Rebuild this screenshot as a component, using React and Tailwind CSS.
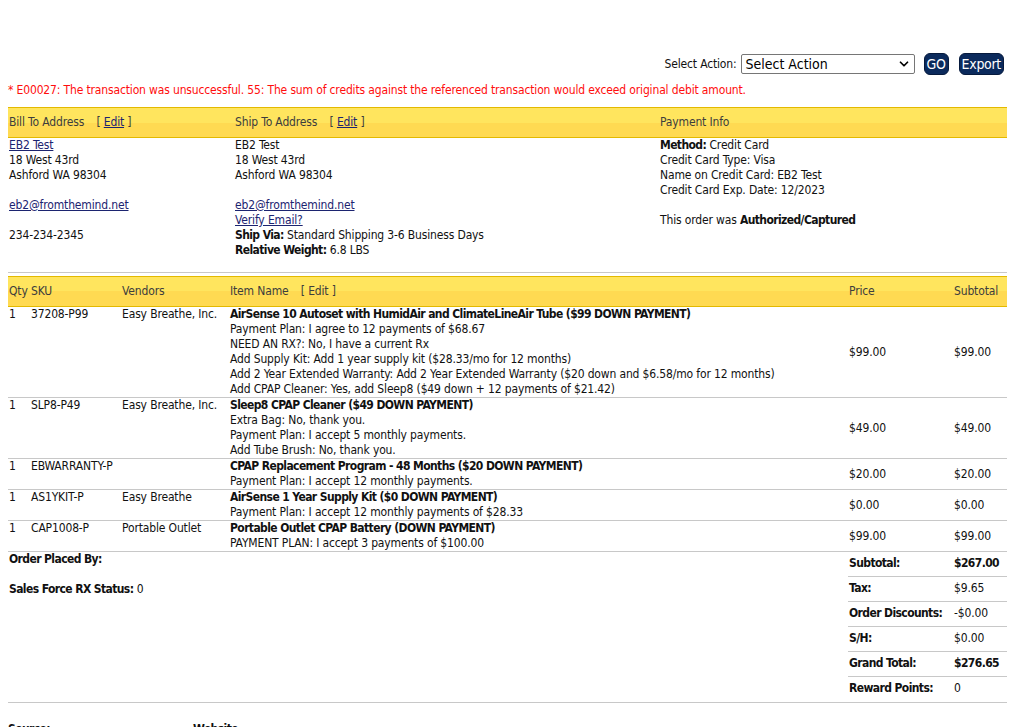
import { ChevronDown } from 'lucide-react';

const bandClass =
  'bg-[linear-gradient(to_bottom,#ffe55e_50%,#ffda52_50%)] border-y border-[#e3b900] text-[#3d3d3d]';

const cols = 'grid grid-cols-[22px_91px_108px_619px_105px_54px]';
const bold = 'font-bold tracking-[-0.6px]';

const items = [
  {
    qty: 1,
    sku: '37208-P99',
    vendor: 'Easy Breathe, Inc.',
    name: 'AirSense 10 Autoset with HumidAir and ClimateLineAir Tube ($99 DOWN PAYMENT)',
    options: [
      'Payment Plan: I agree to 12 payments of $68.67',
      'NEED AN RX?: No, I have a current Rx',
      'Add Supply Kit: Add 1 year supply kit ($28.33/mo for 12 months)',
      'Add 2 Year Extended Warranty: Add 2 Year Extended Warranty ($20 down and $6.58/mo for 12 months)',
      'Add CPAP Cleaner: Yes, add Sleep8 ($49 down + 12 payments of $21.42)',
    ],
    price: '$99.00',
    subtotal: '$99.00',
  },
  {
    qty: 1,
    sku: 'SLP8-P49',
    vendor: 'Easy Breathe, Inc.',
    name: 'Sleep8 CPAP Cleaner ($49 DOWN PAYMENT)',
    options: [
      'Extra Bag: No, thank you.',
      'Payment Plan: I accept 5 monthly payments.',
      'Add Tube Brush: No, thank you.',
    ],
    price: '$49.00',
    subtotal: '$49.00',
  },
  {
    qty: 1,
    sku: 'EBWARRANTY-P',
    vendor: '',
    name: 'CPAP Replacement Program - 48 Months ($20 DOWN PAYMENT)',
    options: ['Payment Plan: I accept 12 monthly payments.'],
    price: '$20.00',
    subtotal: '$20.00',
  },
  {
    qty: 1,
    sku: 'AS1YKIT-P',
    vendor: 'Easy Breathe',
    name: 'AirSense 1 Year Supply Kit ($0 DOWN PAYMENT)',
    options: ['Payment Plan: I accept 12 monthly payments of $28.33'],
    price: '$0.00',
    subtotal: '$0.00',
  },
  {
    qty: 1,
    sku: 'CAP1008-P',
    vendor: 'Portable Outlet',
    name: 'Portable Outlet CPAP Battery (DOWN PAYMENT)',
    options: ['PAYMENT PLAN: I accept 3 payments of $100.00'],
    price: '$99.00',
    subtotal: '$99.00',
  },
];

const totals = [
  { label: 'Subtotal:', value: '$267.00', bold: true },
  { label: 'Tax:', value: '$9.65' },
  { label: 'Order Discounts:', value: '-$0.00' },
  { label: 'S/H:', value: '$0.00' },
  { label: 'Grand Total:', value: '$276.65', bold: true },
  { label: 'Reward Points:', value: '0' },
];

export default function App() {
  return (
    <div className="min-h-screen bg-white font-['DejaVu_Sans_Condensed','DejaVu_Sans',sans-serif] text-[12px] leading-[15px] tracking-[-0.15px] text-[#111]">
      <div className="w-[1007px] pl-2 pt-[53px]">
        {/* Action bar */}
        <div className="flex items-center justify-end pr-[3px]">
          <span className="mr-[4px]">Select Action:</span>
          <div className="flex h-[20px] w-[174px] items-center justify-between rounded-[2px] border border-[#767676] pl-[4px] pr-[3px] text-[14px] tracking-normal text-black">
            <span>Select Action</span>
            <ChevronDown size={14} strokeWidth={3} />
          </div>
          <button className="ml-[9px] h-[22px] rounded-[6px] border border-[#061a3d] bg-[#0b2a5c] px-[2px] text-[14px] leading-[20px] tracking-[-0.3px] text-white">
            GO
          </button>
          <button className="ml-[10px] h-[22px] rounded-[6px] border border-[#061a3d] bg-[#0b2a5c] px-[2px] text-[14px] leading-[20px] tracking-[-0.3px] text-white">
            Export
          </button>
        </div>

        {/* Error */}
        <div className="mt-[8px] text-[#ff0d0d]">
          * E00027: The transaction was unsuccessful. 55: The sum of credits against the referenced transaction would exceed original debit amount.
        </div>

        {/* Addresses */}
        <div className={`mt-[9px] grid h-[31px] grid-cols-[226px_425px_348px] items-center ${bandClass}`}>
          <div className="pl-px">
            Bill To Address <span className="ml-[9px]">[ <a className="text-[#1c2470] underline">Edit</a> ]</span>
          </div>
          <div className="pl-px">
            Ship To Address <span className="ml-[9px]">[ <a className="text-[#1c2470] underline">Edit</a> ]</span>
          </div>
          <div className="pl-px">Payment Info</div>
        </div>
        <div className="grid grid-cols-[226px_425px_348px]">
          <div className="pl-px">
            <a className="text-[#1c2470] underline">EB2 Test</a>
            <div>18 West 43rd</div>
            <div>Ashford WA 98304</div>
            <div className="h-[15px]" />
            <a className="text-[#1c2470] underline">eb2@fromthemind.net</a>
            <div className="h-[15px]" />
            <div>234-234-2345</div>
          </div>
          <div className="pl-px">
            <div>EB2 Test</div>
            <div>18 West 43rd</div>
            <div>Ashford WA 98304</div>
            <div className="h-[15px]" />
            <div>
              <a className="text-[#1c2470] underline">eb2@fromthemind.net</a>
            </div>
            <div>
              <a className="text-[#1c2470] underline">Verify Email?</a>
            </div>
            <div>
              <b className={bold}>Ship Via:</b> Standard Shipping 3-6 Business Days
            </div>
            <div>
              <b className={bold}>Relative Weight:</b> 6.8 LBS
            </div>
          </div>
          <div className="pl-px">
            <div>
              <b className={bold}>Method:</b> Credit Card
            </div>
            <div>Credit Card Type: Visa</div>
            <div>Name on Credit Card: EB2 Test</div>
            <div>Credit Card Exp. Date: 12/2023</div>
            <div className="h-[15px]" />
            <div>
              This order was <b className={bold}>Authorized/Captured</b>
            </div>
          </div>
        </div>

        <div className="mt-[14px] border-t border-[#c8c8c8]" />

        {/* Items */}
        <div className={`mt-[3px] h-[31px] items-center ${cols} ${bandClass}`}>
          <div className="pl-px">Qty</div>
          <div className="pl-px">SKU</div>
          <div className="pl-px">Vendors</div>
          <div className="pl-px">
            Item Name <span className="ml-[9px]">[ Edit ]</span>
          </div>
          <div className="pl-px">Price</div>
          <div className="pl-px">Subtotal</div>
        </div>
        {items.map((item) => (
          <div key={item.sku} className={`${cols} border-b border-[#c8c8c8]`}>
            <div className="pl-px">{item.qty}</div>
            <div className="pl-px">{item.sku}</div>
            <div className="pl-px">{item.vendor}</div>
            <div className="pl-px">
              <div className={bold}>{item.name}</div>
              {item.options.map((o) => (
                <div key={o}>{o}</div>
              ))}
            </div>
            <div className="self-center pl-px">{item.price}</div>
            <div className="self-center pl-px">{item.subtotal}</div>
          </div>
        ))}

        {/* Summary */}
        <div className="flex border-b border-[#c8c8c8]">
          <div className="w-[840px] pl-px">
            <div className={bold}>Order Placed By:</div>
            <div className="h-[15px]" />
            <div>
              <b className={bold}>Sales Force RX Status:</b> 0
            </div>
          </div>
          <div className="w-[159px]">
            {totals.map((t, i) => (
              <div
                key={t.label}
                className={`grid h-[25px] grid-cols-[105px_54px] pt-[4px] ${i < totals.length - 1 ? 'border-b border-[#c8c8c8]' : ''}`}
              >
                <div className={`pl-px ${bold}`}>{t.label}</div>
                <div className={`pl-px ${t.bold ? bold : ''}`}>{t.value}</div>
              </div>
            ))}
          </div>
        </div>

        <div className="mt-[19px] grid grid-cols-[185px_1fr]">
          <div className={bold}>Source:</div>
          <div className={bold}>Website</div>
        </div>
      </div>
    </div>
  );
}
